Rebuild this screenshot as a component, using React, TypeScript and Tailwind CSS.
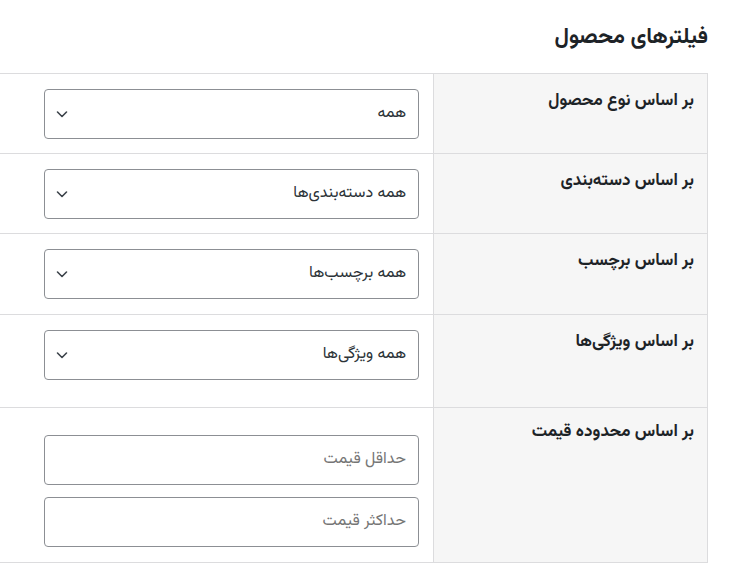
import React from "react";

const font = { fontFamily: '"Vazirmatn", "Noto Sans Arabic", "Noto Sans Arabic UI", "Noto Naskh Arabic", "DejaVu Sans", sans-serif' };

function Chevron() {
  return (
    <svg width="14" height="14" viewBox="0 0 14 14" fill="none" className="shrink-0">
      <path d="M2.5 5l4.5 4.5L11.5 5" stroke="#3c434a" strokeWidth="1.6" strokeLinecap="round" strokeLinejoin="round" />
    </svg>
  );
}

function Select({ value }: { value: string }) {
  return (
    <div className="h-[50px] w-[375px] rounded-[4px] border border-[#8c8f94] bg-white flex items-center justify-between pr-3 pl-[10px]">
      <span className="text-[16px] text-[#2c3338]">{value}</span>
      <Chevron />
    </div>
  );
}

function Input({ placeholder }: { placeholder: string }) {
  return (
    <div className="h-[50px] w-[375px] rounded-[4px] border border-[#8c8f94] bg-white flex items-center pr-3">
      <span className="text-[16px] text-[#757575]">{placeholder}</span>
    </div>
  );
}

function Row({
  label,
  children,
  pb,
  first,
}: {
  label: string;
  children: React.ReactNode;
  pb: string;
  first?: boolean;
}) {
  return (
    <div className={`grid grid-cols-[275px_1fr] border-b border-[#dcdcde] ${first ? "border-t" : ""}`}>
      <div className="bg-[#f6f6f6] border-l border-r border-[#dcdcde] pr-[13px] pt-[15px] text-[17px] font-bold text-[#1d2327] leading-6">
        {label}
      </div>
      <div className={`pt-[15px] pr-[14px] ${pb} flex flex-col gap-[12px]`}>{children}</div>
    </div>
  );
}

export default function App() {
  return (
    <div style={font} className="w-[732px] h-[584px] bg-white">
      <div dir="rtl" className="w-[708px]">
        <h2 className="pt-[22px] pb-[19px] text-[22px] font-bold text-[#1d2327] leading-[32px]">فیلترهای محصول</h2>
        <Row label="بر اساس نوع محصول" pb="pb-[14px]" first>
          <Select value="همه" />
        </Row>
        <Row label="بر اساس دسته‌بندی" pb="pb-[14px]">
          <Select value="همه دسته‌بندی‌ها" />
        </Row>
        <Row label="بر اساس برچسب" pb="pb-[15px]">
          <Select value="همه برچسب‌ها" />
        </Row>
        <Row label="بر اساس ویژگی‌ها" pb="pb-[27px]">
          <Select value="همه ویژگی‌ها" />
        </Row>
        <div className="grid grid-cols-[275px_1fr] border-b border-[#dcdcde]">
          <div className="bg-[#f6f6f6] border-l border-r border-[#dcdcde] pr-[13px] pt-[12px] text-[17px] font-bold text-[#1d2327] leading-6">
            بر اساس محدوده قیمت
          </div>
          <div className="pt-[27px] pr-[14px] pb-[15px] flex flex-col gap-[12px]">
            <Input placeholder="حداقل قیمت" />
            <Input placeholder="حداکثر قیمت" />
          </div>
        </div>
      </div>
    </div>
  );
}
